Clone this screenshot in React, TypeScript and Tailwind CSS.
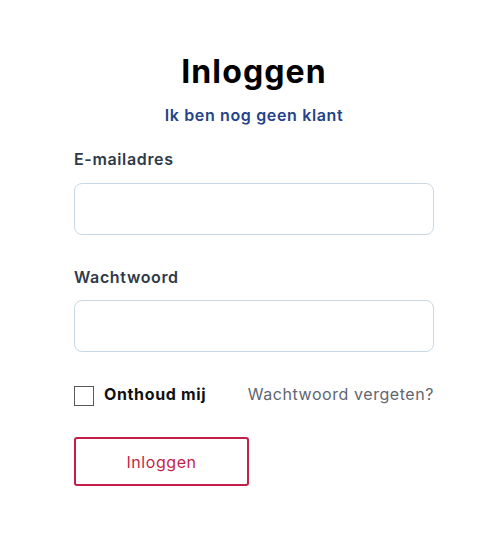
import React, { useState } from "react";

const App: React.FC = () => {
  const [remember, setRemember] = useState(false);

  return (
    <div className="min-h-[536px] bg-white font-['Inter','Noto_Sans',sans-serif]">
      <div className="ml-[74px] w-[360px] pt-[50px]">
        <h1 className="text-center text-[32px] font-bold leading-[44px] tracking-[0.035em] text-black">Inloggen</h1>
        <div className="mt-[9px] text-center">
          <a href="#" className="text-[16px] font-semibold leading-[24px] tracking-[0.04em] text-[#24438a]">
            Ik ben nog geen klant
          </a>
        </div>

        <label className="mt-[20px] block text-[16px] font-semibold leading-[24px] tracking-[0.04em] text-[#2f3a48]">E-mailadres</label>
        <input
          type="email"
          className="mt-[12px] block h-[52px] w-full rounded-[8px] border border-[#c8d8e4] px-3 outline-none"
        />

        <label className="mt-[30px] block text-[16px] font-semibold leading-[24px] tracking-[0.04em] text-[#2f3a48]">Wachtwoord</label>
        <input
          type="password"
          className="mt-[11px] block h-[52px] w-full rounded-[8px] border border-[#c8d8e4] px-3 outline-none"
        />

        <div className="mt-[30px] flex items-center justify-between">
          <label className="flex items-center gap-[10px]">
            <span
              onClick={() => setRemember(!remember)}
              className={`mt-[4px] block h-[20px] w-[20px] border border-[#5a5a5a] ${remember ? "bg-[#c41f48]" : "bg-white"}`}
            />
            <span className="text-[16px] font-bold leading-[24px] tracking-[0.04em] text-[#111]">Onthoud mij</span>
          </label>
          <a href="#" className="text-[16px] leading-[24px] tracking-[0.035em] text-[#5f6670]">Wachtwoord vergeten?</a>
        </div>

        <button className="mt-[31px] h-[49px] w-[175px] rounded-[3px] border-2 border-[#c41f48] text-[16px] leading-[24px] tracking-[0.035em] text-[#c41f48]">
          Inloggen
        </button>
      </div>
    </div>
  );
};

export default App;
